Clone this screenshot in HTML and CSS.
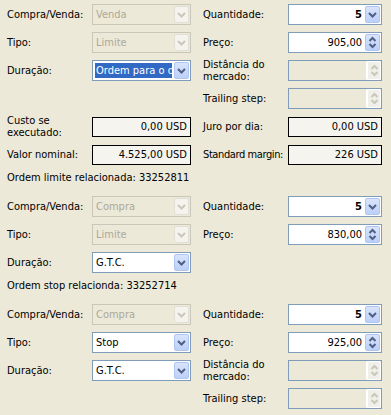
FILE: index.html
```html
<!DOCTYPE html>
<html lang="pt">
<head>
    <meta charset="UTF-8">
    <title>Ordem</title>
    <link rel="stylesheet" href="styles.css">
</head>
<body>
    <div class="panel">
        <!-- main order -->
        <div class="grid">
            <div class="lbl">Compra/Venda:</div>
            <div class="combo off"><span class="val">Venda</span><span class="btn"><svg width="9" height="6" viewBox="0 0 9 6"><path d="M1 1l3.5 3.5L8 1"/></svg></span></div>
            <div class="lbl">Quantidade:</div>
            <div class="combo num"><span class="val bold">5</span><span class="btn"><svg width="9" height="6" viewBox="0 0 9 6"><path d="M1 1l3.5 3.5L8 1"/></svg></span></div>

            <div class="lbl">Tipo:</div>
            <div class="combo off"><span class="val">Limite</span><span class="btn"><svg width="9" height="6" viewBox="0 0 9 6"><path d="M1 1l3.5 3.5L8 1"/></svg></span></div>
            <div class="lbl">Preço:</div>
            <div class="spin"><span class="val">905,00</span><span class="btn"><svg width="9" height="13" viewBox="0 0 9 13"><path d="M1.5 5l3-3 3 3M1.5 8l3 3 3-3"/></svg></span></div>

            <div class="lbl">Duração:</div>
            <div class="combo"><span class="val sel">Ordem para o dia</span><span class="btn"><svg width="9" height="6" viewBox="0 0 9 6"><path d="M1 1l3.5 3.5L8 1"/></svg></span></div>
            <div class="lbl">Distância do<br>mercado:</div>
            <div class="spin off"><span class="val"></span><span class="btn"><svg width="9" height="13" viewBox="0 0 9 13"><path d="M1.5 5l3-3 3 3M1.5 8l3 3 3-3"/></svg></span></div>

            <div></div>
            <div></div>
            <div class="lbl">Trailing step:</div>
            <div class="spin off"><span class="val"></span><span class="btn"><svg width="9" height="13" viewBox="0 0 9 13"><path d="M1.5 5l3-3 3 3M1.5 8l3 3 3-3"/></svg></span></div>

            <div class="lbl">Custo se<br>executado:</div>
            <div class="readout">0,00 USD</div>
            <div class="lbl">Juro por dia:</div>
            <div class="readout">0,00 USD</div>

            <div class="lbl">Valor nominal:</div>
            <div class="readout">4.525,00 USD</div>
            <div class="lbl tight">Standard margin:</div>
            <div class="readout">226 USD</div>
        </div>

        <p class="note">Ordem limite relacionada: 33252811</p>

        <div class="grid">
            <div class="lbl">Compra/Venda:</div>
            <div class="combo off"><span class="val">Compra</span><span class="btn"><svg width="9" height="6" viewBox="0 0 9 6"><path d="M1 1l3.5 3.5L8 1"/></svg></span></div>
            <div class="lbl">Quantidade:</div>
            <div class="combo num"><span class="val bold">5</span><span class="btn"><svg width="9" height="6" viewBox="0 0 9 6"><path d="M1 1l3.5 3.5L8 1"/></svg></span></div>

            <div class="lbl">Tipo:</div>
            <div class="combo off"><span class="val">Limite</span><span class="btn"><svg width="9" height="6" viewBox="0 0 9 6"><path d="M1 1l3.5 3.5L8 1"/></svg></span></div>
            <div class="lbl">Preço:</div>
            <div class="spin"><span class="val">830,00</span><span class="btn"><svg width="9" height="13" viewBox="0 0 9 13"><path d="M1.5 5l3-3 3 3M1.5 8l3 3 3-3"/></svg></span></div>

            <div class="lbl">Duração:</div>
            <div class="combo"><span class="val">G.T.C.</span><span class="btn"><svg width="9" height="6" viewBox="0 0 9 6"><path d="M1 1l3.5 3.5L8 1"/></svg></span></div>
        </div>

        <p class="note">Ordem stop relacionda: 33252714</p>

        <div class="grid">
            <div class="lbl">Compra/Venda:</div>
            <div class="combo off"><span class="val">Compra</span><span class="btn"><svg width="9" height="6" viewBox="0 0 9 6"><path d="M1 1l3.5 3.5L8 1"/></svg></span></div>
            <div class="lbl">Quantidade:</div>
            <div class="combo num"><span class="val bold">5</span><span class="btn"><svg width="9" height="6" viewBox="0 0 9 6"><path d="M1 1l3.5 3.5L8 1"/></svg></span></div>

            <div class="lbl">Tipo:</div>
            <div class="combo"><span class="val">Stop</span><span class="btn"><svg width="9" height="6" viewBox="0 0 9 6"><path d="M1 1l3.5 3.5L8 1"/></svg></span></div>
            <div class="lbl">Preço:</div>
            <div class="spin"><span class="val">925,00</span><span class="btn"><svg width="9" height="13" viewBox="0 0 9 13"><path d="M1.5 5l3-3 3 3M1.5 8l3 3 3-3"/></svg></span></div>

            <div class="lbl">Duração:</div>
            <div class="combo"><span class="val">G.T.C.</span><span class="btn"><svg width="9" height="6" viewBox="0 0 9 6"><path d="M1 1l3.5 3.5L8 1"/></svg></span></div>
            <div class="lbl">Distância do<br>mercado:</div>
            <div class="spin off"><span class="val"></span><span class="btn"><svg width="9" height="13" viewBox="0 0 9 13"><path d="M1.5 5l3-3 3 3M1.5 8l3 3 3-3"/></svg></span></div>

            <div></div>
            <div></div>
            <div class="lbl">Trailing step:</div>
            <div class="spin off"><span class="val"></span><span class="btn"><svg width="9" height="13" viewBox="0 0 9 13"><path d="M1.5 5l3-3 3 3M1.5 8l3 3 3-3"/></svg></span></div>
        </div>
    </div>
</body>
</html>
```

FILE: styles.css
```css
body {
    margin: 0;
    background-color: #ece9d8;
    font-family: "DejaVu Sans Condensed", "Liberation Sans", sans-serif;
    font-size: 11px;
    color: #000;
}
.panel {
    padding: 4px 0 0 7px;
}
.grid {
    display: grid;
    grid-template-columns: 85px 111px 85px 94px;
    grid-auto-rows: 21px;
    row-gap: 7px;
}
.lbl {
    display: flex;
    align-items: center;
    line-height: 12px;
    white-space: nowrap;
}
.lbl.tight {
    letter-spacing: -0.4px;
}
.note {
    margin: 6px 0 11px;
    line-height: 14px;
}

/* combo boxes and spinners */
.combo, .spin {
    display: flex;
    width: 99px;
    box-sizing: border-box;
    border: 1px solid #7f9db9;
    background-color: #fff;
}
.grid > :nth-child(4n) {
    width: 94px;
}
.val {
    flex: 1;
    display: flex;
    align-items: center;
    padding: 0 3px;
    overflow: hidden;
    white-space: nowrap;
}
.num .val, .spin .val {
    justify-content: flex-end;
    padding-right: 2px;
}
.bold {
    font-weight: bold;
}
.sel {
    margin: 2px 1px 2px 2px;
    padding: 0 1px;
    background-color: #316ac5;
    color: #fff;
}
.btn {
    width: 15px;
    margin: 1px;
    box-sizing: border-box;
    display: flex;
    align-items: center;
    justify-content: center;
    border: 1px solid #b1c5f3;
    border-radius: 2px;
    background: linear-gradient(#d9e4fd, #bccff8);
}
.btn path {
    fill: none;
    stroke: #4d6185;
    stroke-width: 2;
}
.combo.off {
    border-color: #c9c7ba;
    background-color: #ece9d8;
    color: #aca899;
}
.off .btn {
    border-color: #e2e0d6;
    background: #f4f3ee;
}
.off .btn path {
    stroke: #c9c7ba;
}
.spin.off {
    background-color: #ece9d8;
}
.spin.off .btn {
    margin: 0;
    border: 1px solid #fff;
    border-left-width: 2px;
    background: #f0efe9;
}

/* read only values */
.readout {
    width: 99px;
    height: 20px;
    align-self: center;
    box-sizing: border-box;
    border: 1px solid #000;
    background-color: #f5f4ef;
    padding: 0 3px;
    text-align: right;
    line-height: 18px;
}
```
